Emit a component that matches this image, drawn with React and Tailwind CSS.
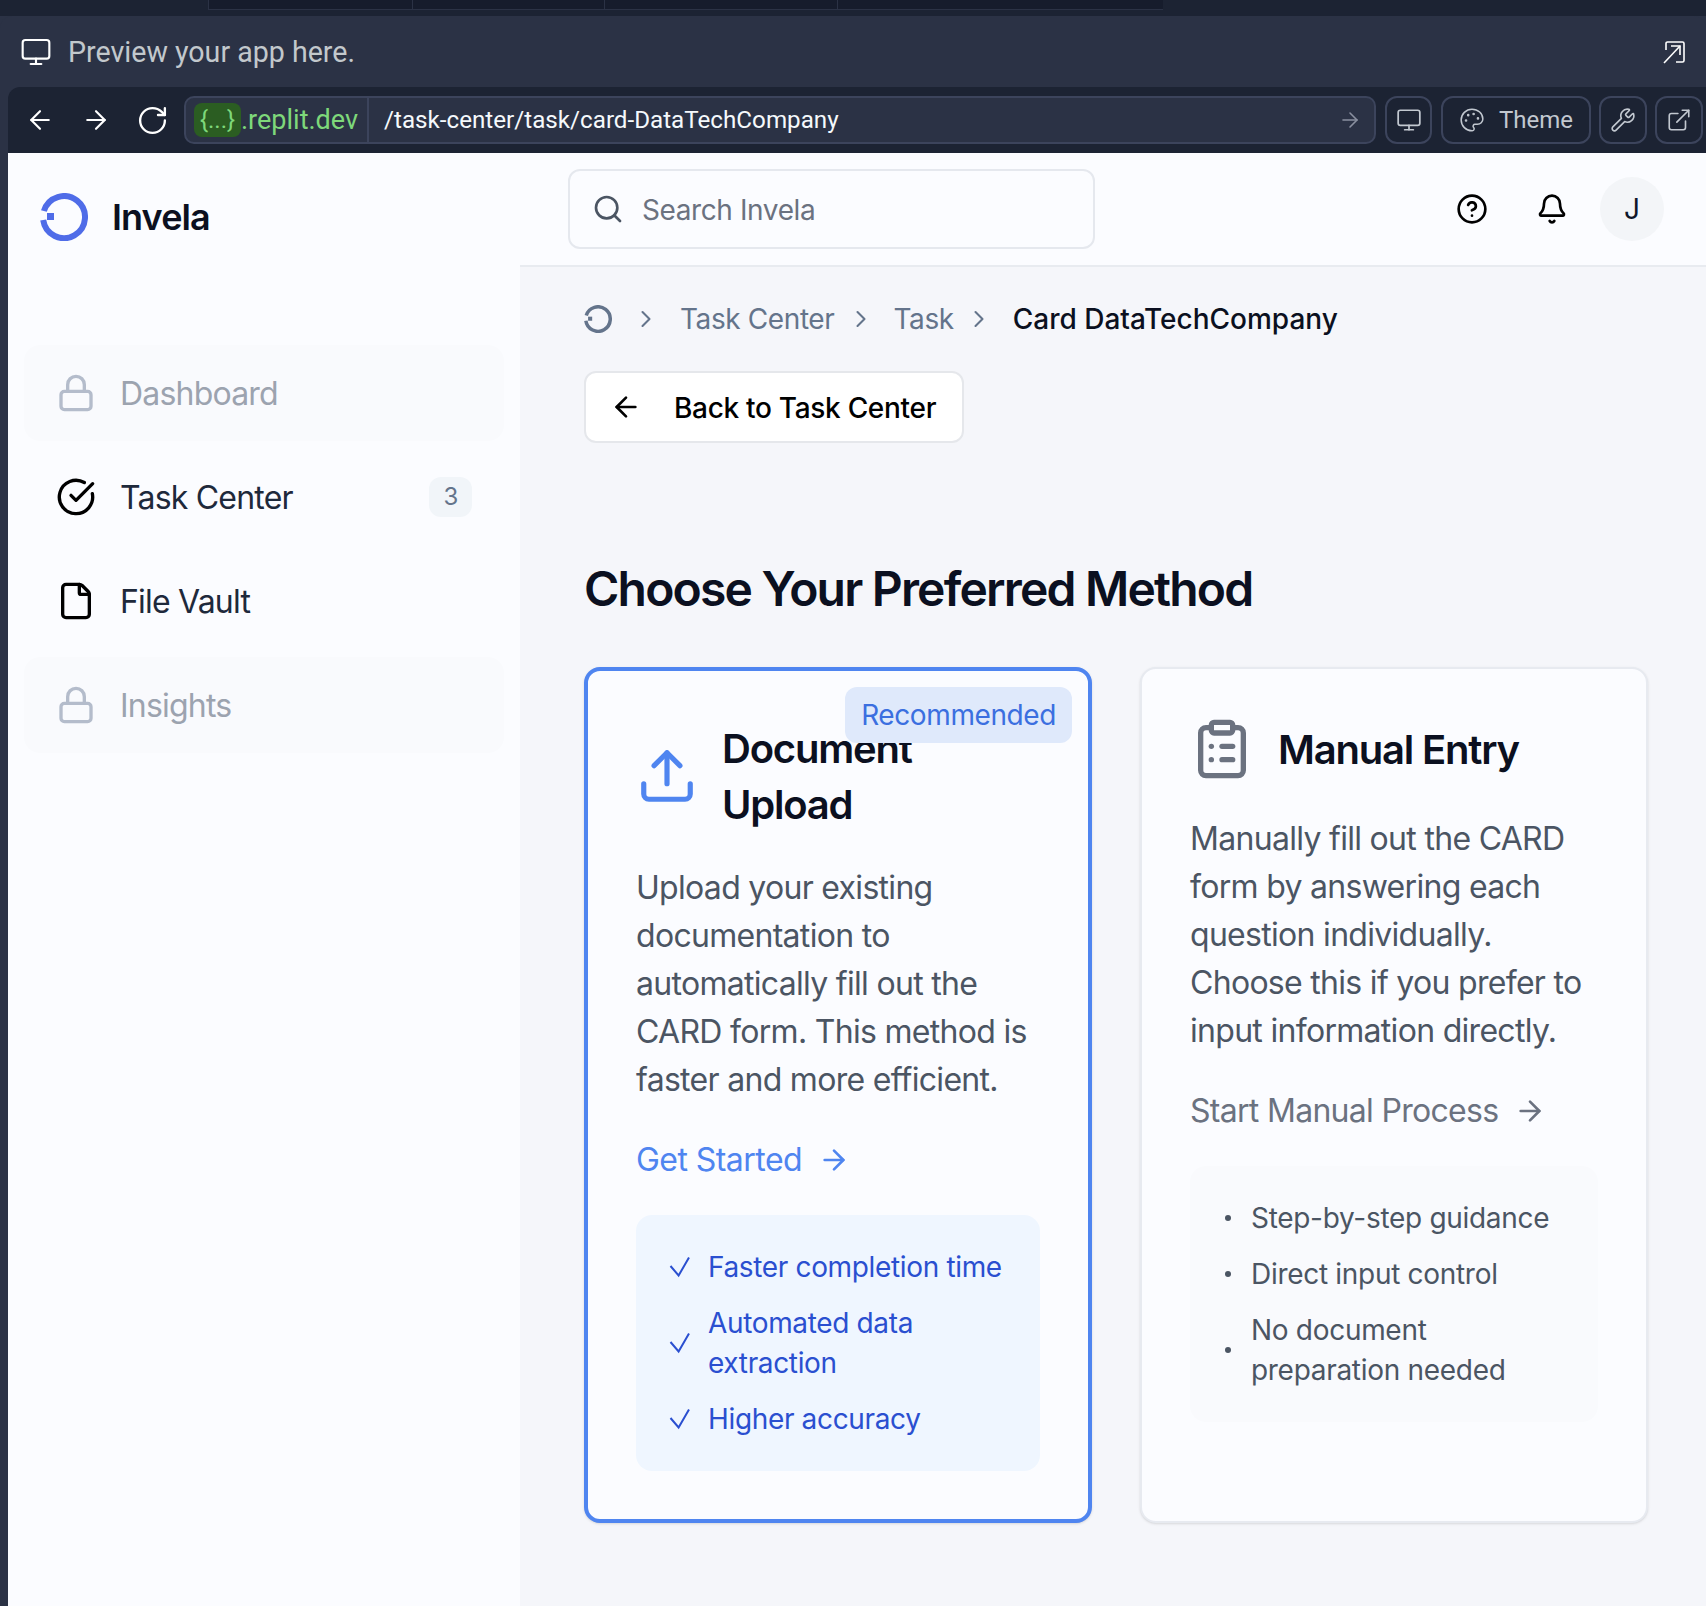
import {
  ArrowLeft,
  ArrowRight,
  Bell,
  ChevronRight,
  CircleCheckBig,
  CircleHelp,
  ClipboardList,
  ExternalLink,
  File,
  Lock,
  Monitor,
  Palette,
  RotateCw,
  Search,
  Upload,
  Wrench,
} from "lucide-react"

const ui = "font-['Inter','Liberation_Sans',sans-serif]"
const chrome = "font-['Roboto','Liberation_Sans',sans-serif]"

function Logo({size, color}) {
  return (
    <svg width={size} height={size} viewBox="0 0 48 48" fill="none" className="shrink-0">
      <path d="M3.9 18A21 21 0 1 1 3.2 27" stroke={color} strokeWidth="6" />
      <rect x="7" y="20" width="7" height="7" fill={color} />
    </svg>
  )
}

function Tick() {
  return (
    <svg width="28" height="28" viewBox="0 0 28 28" fill="none" className="shrink-0 text-[#2a4fd0]">
      <path d="M2.5 13 10.6 22.5 21 4.5" stroke="currentColor" strokeWidth="2" />
    </svg>
  )
}

function PreviewExpand() {
  return (
    <svg width="24" height="24" viewBox="0 0 24 24" fill="none" stroke="white" strokeWidth="1.6" className="shrink-0">
      <path d="M4 10V3.5A1.5 1.5 0 0 1 5.5 2h15A1.5 1.5 0 0 1 22 3.5v17a1.5 1.5 0 0 1-1.5 1.5H14" />
      <path d="M2 23 18 6" />
      <path d="M9 6h9v9" />
    </svg>
  )
}

function ToolButton({children, className}) {
  return (
    <div className={`flex h-12 items-center justify-center rounded-[12px] border-2 border-[#3c445c] ${className}`}>
      {children}
    </div>
  )
}

function ChromeBars() {
  return (
    <div className={`shrink-0 ${chrome}`}>
      <div className="flex h-4 bg-[#1c2333]">
        <div className="ml-[208px] flex h-[10px] w-[955px] border-b border-l border-[#2b3245] bg-[#161c2c]">
          <div className="w-[204px] border-r border-[#2b3245]" />
          <div className="w-[192px] border-r border-[#2b3245]" />
          <div className="w-[233px] border-r border-[#2b3245]" />
        </div>
      </div>
      <div className="flex h-[71px] items-center rounded-t-[12px] bg-[#2b3245] pl-[20px] pr-[20px]">
        <Monitor size={32} strokeWidth={1.6} className="text-white" />
        <span className="ml-[16px] flex-1 pt-[2px] text-[28.6px] text-[#c2c8cc]">Preview your app here.</span>
        <PreviewExpand />
      </div>
      <div className="ml-2 flex h-[66px] items-center rounded-tl-[12px] bg-[#1c2333] pl-[17px]">
        <ArrowLeft size={30} strokeWidth={1.7} className="text-white" />
        <ArrowRight size={30} strokeWidth={1.7} className="ml-[26px] text-white" />
        <RotateCw size={33} strokeWidth={1.7} className="ml-[25px] text-white" />
        <div className="ml-[15px] flex h-12 w-[1192px] items-center rounded-[10px] border-2 border-[#3c445c] bg-[#2b3245] pl-2 pr-3">
          <span className="flex h-[34px] w-[47px] items-center justify-center rounded-[8px] bg-[#2b5d22] text-[24px] text-[#7ed87a]">
            {"{...}"}
          </span>
          <span className="text-[27px] text-[#7ed87a]">.replit.dev</span>
          <div className="ml-[9px] h-full w-[2px] bg-[#3c445c]" />
          <span className="ml-[15px] flex-1 text-[24.2px] text-[#f5f9fc]">/task-center/task/card-DataTechCompany</span>
          <ArrowRight size={24} strokeWidth={1.6} className="text-[#8a90a0]" />
        </div>
        <ToolButton className="ml-[9px] w-[47px]">
          <Monitor size={26} strokeWidth={1.6} className="text-[#c2c8d0]" />
        </ToolButton>
        <ToolButton className="ml-[9px] w-[150px] gap-[14px]">
          <Palette size={26} strokeWidth={1.4} className="text-[#c2c8d0]" />
          <span className="text-[24px] text-[#c2c8d0]">Theme</span>
        </ToolButton>
        <ToolButton className="ml-[8px] w-[48px]">
          <Wrench size={26} strokeWidth={1.5} className="text-[#c2c8d0]" />
        </ToolButton>
        <ToolButton className="ml-[8px] w-[48px]">
          <ExternalLink size={26} strokeWidth={1.5} className="text-[#c2c8d0]" />
        </ToolButton>
      </div>
    </div>
  )
}

function NavItem({icon: Icon, label, locked, badge}) {
  return (
    <div
      className={`flex h-24 items-center gap-6 rounded-[16px] px-8 text-[32px] tracking-[-0.8px] ${
        locked ? "bg-[#f9fafd] text-[#9ca3af]" : "text-[#1e293b]"
      }`}
    >
      <Icon size={40} strokeWidth={2} className={locked ? "text-[#b4bccb]" : "text-black"} />
      <span className="flex-1 pt-[2px]">{label}</span>
      {badge && (
        <span className="flex h-10 w-[43px] items-center justify-center rounded-[12px] bg-[#f1f5f9] text-[24px] text-[#64748b]">
          {badge}
        </span>
      )}
    </div>
  )
}

function Sidebar() {
  return (
    <aside className="flex w-[512px] shrink-0 flex-col bg-[#fbfcff]">
      <div className="flex h-[128px] items-center gap-[24px] pl-8">
        <Logo size={48} color="#4f6ce8" />
        <span className="text-[36px] font-semibold tracking-[-0.9px] text-[#0b1020]">Invela</span>
      </div>
      <nav className="mt-[64px] flex flex-col gap-2 px-4">
        <NavItem icon={Lock} label="Dashboard" locked />
        <NavItem icon={CircleCheckBig} label="Task Center" badge="3" />
        <NavItem icon={File} label="File Vault" />
        <NavItem icon={Lock} label="Insights" locked />
      </nav>
    </aside>
  )
}

function TopBar() {
  return (
    <header className="flex h-[114px] shrink-0 items-center border-b-2 border-[#e8ebf0] bg-[#fbfcff] pl-12 pr-[42px]">
      <div className="flex h-20 w-[527px] items-center gap-[18px] rounded-[12px] border-2 border-[#e5e8ee] pl-[22px]">
        <Search size={32} strokeWidth={2} className="text-[#4b5563]" />
        <span className="pt-[2px] text-[28px] tracking-[-0.4px] text-[#6b7280]">Search Invela</span>
      </div>
      <div className="ml-auto flex items-center">
        <CircleHelp size={32} strokeWidth={2} className="text-black" />
        <Bell size={32} strokeWidth={2} className="ml-12 text-black" />
        <div className="ml-[32px] flex h-16 w-16 items-center justify-center rounded-full bg-[#f3f5f8] text-[28px] text-[#0f172a]">
          J
        </div>
      </div>
    </header>
  )
}

function Breadcrumbs() {
  return (
    <div className="flex h-10 items-center text-[28px] tracking-[-0.4px] text-[#64748b]">
      <Logo size={28} color="#64748b" />
      <ChevronRight size={28} strokeWidth={1.8} className="ml-[20px]" />
      <span className="ml-[20px]">Task Center</span>
      <ChevronRight size={28} strokeWidth={1.8} className="ml-[13px]" />
      <span className="ml-[18px]">Task</span>
      <ChevronRight size={28} strokeWidth={1.8} className="ml-[11px]" />
      <span className="ml-[20px] font-medium tracking-normal text-[#0b1020]">Card DataTechCompany</span>
    </div>
  )
}

function MethodCard({highlight, icon: Icon, iconSize, title, body, action, children}) {
  return (
    <div
      className={`relative rounded-[16px] bg-[#fbfcff] p-12 shadow-sm ${
        highlight ? "border-4 border-[#4f85f0]" : "border-2 border-[#e7eaf0]"
      }`}
    >
      {highlight && (
        <span className="absolute right-[16px] top-[16px] rounded-[12px] bg-[#dfe9fb] px-4 py-2 text-[28px] leading-10 tracking-[-0.4px] text-[#3b6fe0]">
          Recommended
        </span>
      )}
      <div className="flex items-center gap-6">
        <Icon size={iconSize} strokeWidth={2} className={`shrink-0 ${highlight ? "text-[#4f85f0]" : "text-[#6b7280]"}`} />
        <h2 className="pt-[2px] text-[40px] font-semibold leading-14 tracking-[-1.2px] text-[#0b1020]">{title}</h2>
      </div>
      <p className={`text-[32px] leading-12 tracking-[-0.7px] text-[#4b5563] ${highlight ? "mt-[31px]" : "mt-[34px]"}`}>{body}</p>
      <div
        className={`mt-8 flex items-center gap-4 text-[32px] leading-12 ${
          highlight ? "tracking-[-0.55px] text-[#4f85f0]" : "tracking-[-0.7px] text-[#6b7280]"
        }`}
      >
        {action}
        <ArrowRight size={32} strokeWidth={2} />
      </div>
      {children}
    </div>
  )
}

function Perks({items}) {
  return (
    <ul className="mt-[31px] flex flex-col gap-4 rounded-[16px] bg-[#eff6ff] p-8 text-[28px] leading-10 tracking-[-0.35px] text-[#2a4fd0]">
      {items.map((item) => (
        <li key={item} className="flex items-center gap-3">
          <Tick />
          {item}
        </li>
      ))}
    </ul>
  )
}

function Notes({items}) {
  return (
    <ul className="mt-[31px] flex flex-col gap-4 rounded-[16px] bg-[#f9fafd] p-8 text-[28px] leading-10 tracking-[-0.3px] text-[#4b5563]">
      {items.map((item) => (
        <li key={item} className="flex items-center">
          <span className="ml-[3px] mr-[20px] h-[6px] w-[6px] shrink-0 rounded-full bg-[#4b5563]" />
          {item}
        </li>
      ))}
    </ul>
  )
}

export default function App() {
  return (
    <div className={`flex h-[1606px] w-[1706px] flex-col overflow-hidden bg-[#2b3245] ${ui}`}>
      <ChromeBars />
      <div className="ml-2 flex min-h-0 flex-1">
        <Sidebar />
        <main className="flex min-w-0 flex-1 flex-col bg-[#f5f6fa]">
          <TopBar />
          <div className="pl-16 pr-[50px] pt-[32px]">
            <Breadcrumbs />
            <div className="mt-[32px] flex h-[72px] w-[380px] items-center gap-[32px] rounded-[12px] border-2 border-[#e5e7eb] bg-white pl-[24px] text-[28px] font-medium tracking-[-0.3px] text-black">
              <ArrowLeft size={32} strokeWidth={2} />
              <span className="pt-[2px]">Back to Task Center</span>
            </div>
            <h1 className="mt-[114px] text-[48px] font-semibold leading-16 tracking-[-1.8px] text-[#0b1020]">
              Choose Your Preferred Method
            </h1>
            <div className="mt-[46px] grid w-[1064px] grid-cols-2 gap-12">
              <MethodCard
                highlight
                icon={Upload}
                iconSize={62}
                title="Document Upload"
                body="Upload your existing documentation to automatically fill out the CARD form. This method is faster and more efficient."
                action="Get Started"
              >
                <Perks items={["Faster completion time", "Automated data extraction", "Higher accuracy"]} />
              </MethodCard>
              <MethodCard
                icon={ClipboardList}
                iconSize={64}
                title="Manual Entry"
                body="Manually fill out the CARD form by answering each question individually. Choose this if you prefer to input information directly."
                action="Start Manual Process"
              >
                <Notes items={["Step-by-step guidance", "Direct input control", "No document preparation needed"]} />
              </MethodCard>
            </div>
          </div>
        </main>
      </div>
    </div>
  )
}
